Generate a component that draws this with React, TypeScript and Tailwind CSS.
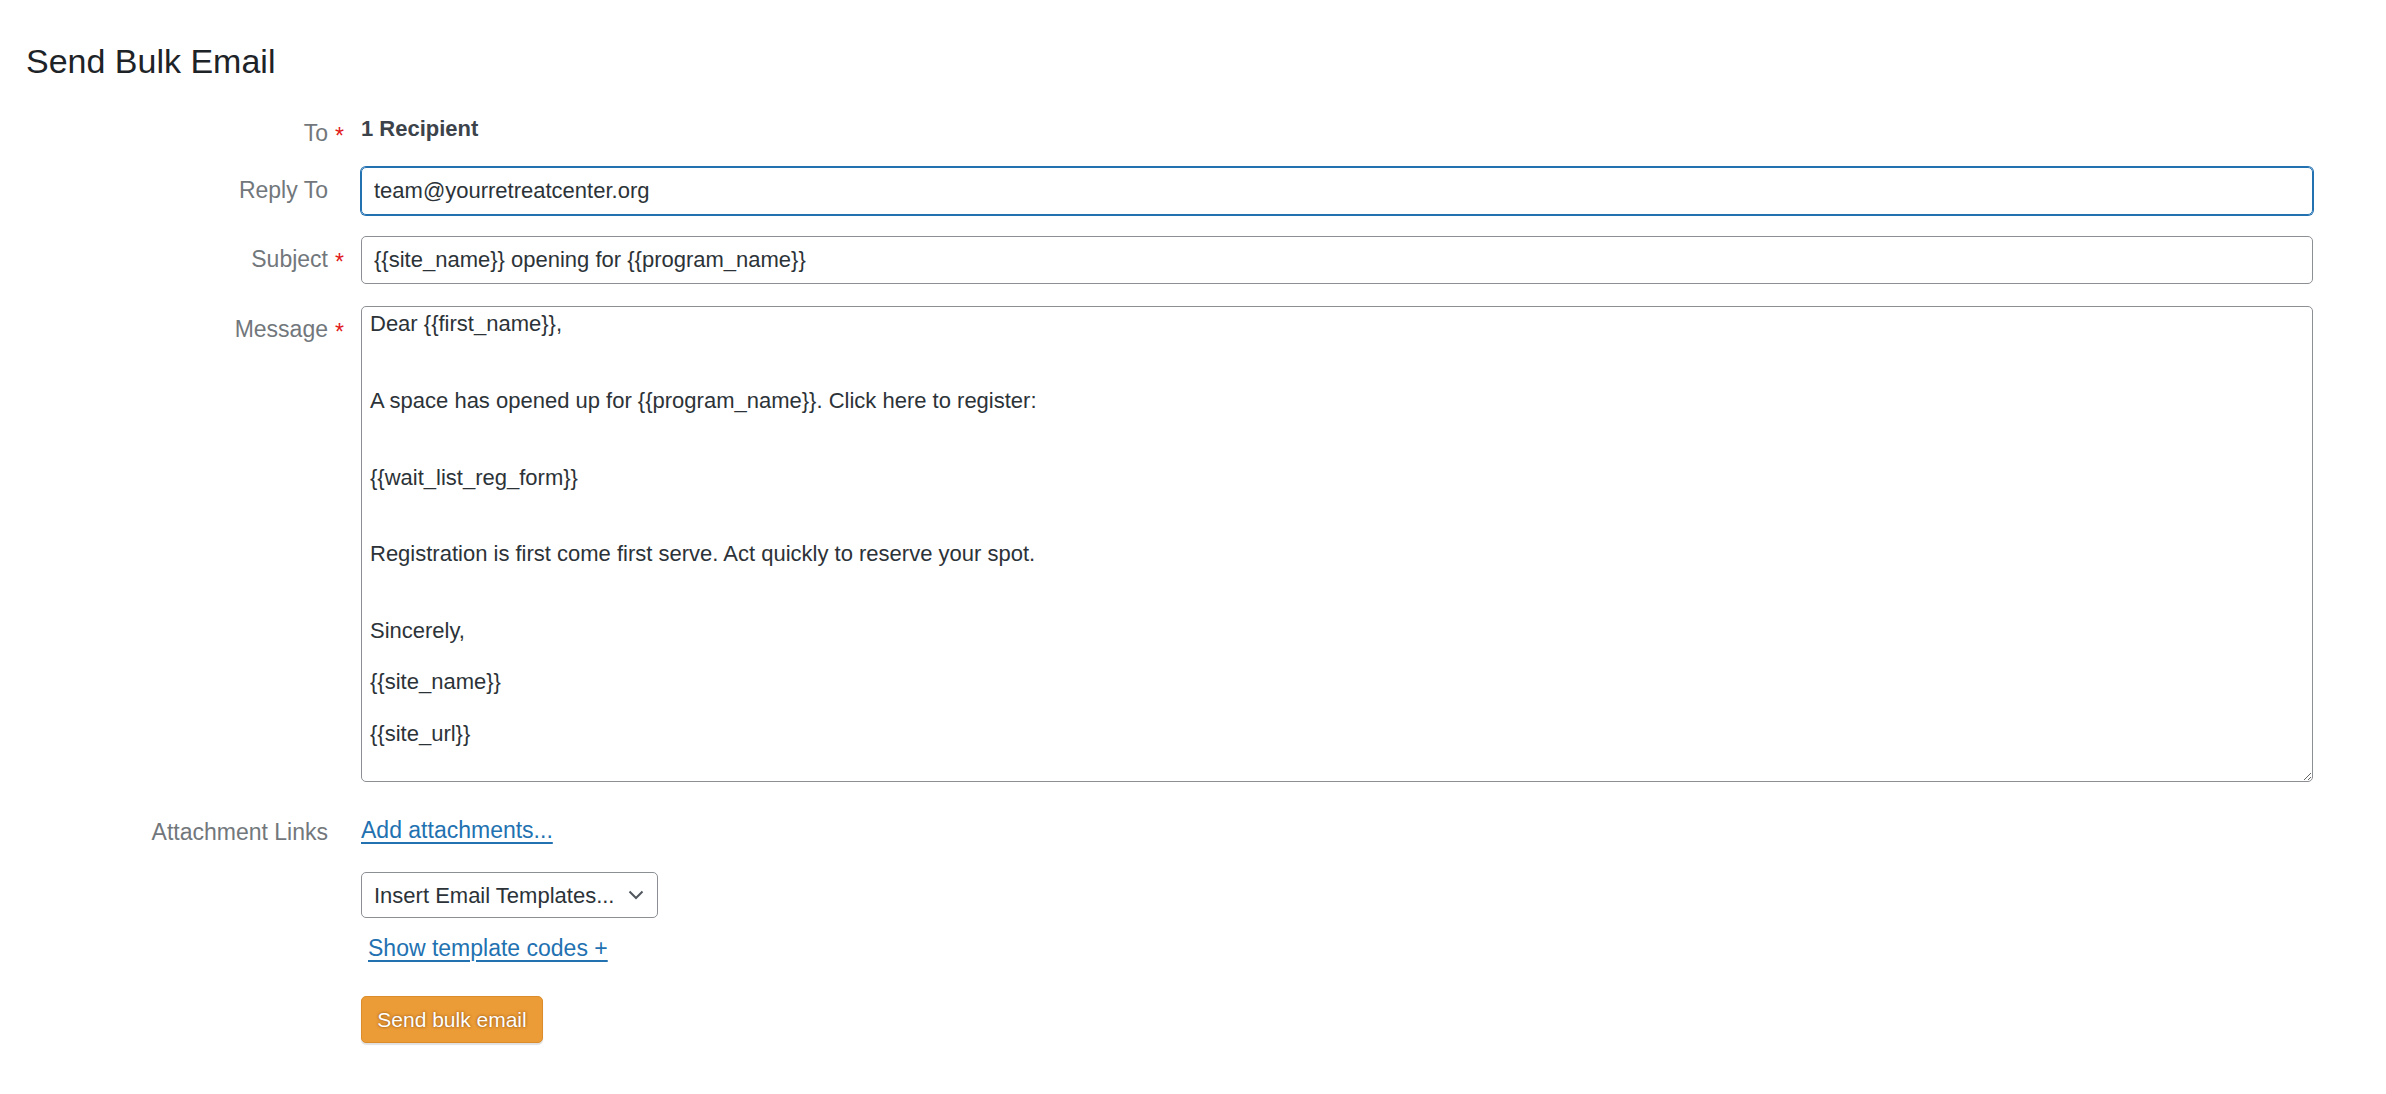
import type { ReactNode } from "react";

const message = `Dear {{first_name}},


A space has opened up for {{program_name}}. Click here to register:


{{wait_list_reg_form}}


Registration is first come first serve. Act quickly to reserve your spot.


Sincerely,

{{site_name}}

{{site_url}}`;

function Row({
  label,
  required,
  pad,
  className,
  children,
}: {
  label?: string;
  required?: boolean;
  pad: string;
  className?: string;
  children: ReactNode;
}) {
  return (
    <div className={`flex items-start ${className ?? ""}`}>
      <div className={`flex w-[320px] shrink-0 justify-end text-[23px] leading-[26px] text-[#72777c] ${pad}`}>
        <span>{label}</span>
        <span className="w-[18px] translate-y-[3px] pl-[7px] text-[#e2191b]">{required ? "*" : ""}</span>
      </div>
      <div className="ml-[15px] min-w-0 flex-1">{children}</div>
    </div>
  );
}

export default function App() {
  return (
    <div className="min-h-screen bg-white pl-[26px] pr-[73px] font-['Liberation_Sans',Arial,sans-serif]">
      <h1 className="pt-[41px] text-[34px] leading-[40px] font-normal text-[#1d2327]">Send Bulk Email</h1>

      <Row label="To" required pad="pt-[4px]" className="mt-[35px]">
        <div className="text-[22px] leading-[26px] font-bold text-[#3c434a]">1 Recipient</div>
      </Row>

      <Row label="Reply To" pad="pt-[10px]" className="mt-[21px]">
        <input
          readOnly
          value="team@yourretreatcenter.org"
          className="block h-[48px] w-full rounded-[5px] border border-[#2271b1] px-[12px] text-[22px] text-[#2c3338] shadow-[0_0_0_1px_#2271b1] outline-none"
        />
      </Row>

      <Row label="Subject" required pad="pt-[10px]" className="mt-[21px]">
        <input
          readOnly
          value="{{site_name}} opening for {{program_name}}"
          className="block h-[48px] w-full rounded-[5px] border border-[#8c8f94] px-[12px] text-[22px] text-[#2c3338] outline-none"
        />
      </Row>

      <Row label="Message" required pad="pt-[10px]" className="mt-[22px]">
        <textarea
          readOnly
          value={message}
          className="block h-[476px] w-full rounded-[5px] border border-[#8c8f94] px-[8px] pt-[4px] text-[22px] leading-[25.6px] text-[#2c3338] outline-none"
        />
      </Row>

      <Row label="Attachment Links" pad="pt-[2px]" className="mt-[35px]">
        <a href="#" className="block w-fit text-[23px] leading-[26px] text-[#2271b1] underline underline-offset-[4px]">
          Add attachments...
        </a>
      </Row>

      <Row pad="" className="mt-[27px]">
        <div className="flex h-[46px] w-[297px] items-center justify-between rounded-[5px] border border-[#8c8f94] pl-[12px] pr-[13px] text-[22px] text-[#2c3338]">
          <span>Insert Email Templates...</span>
          <svg width="16" height="10" viewBox="0 0 16 10" fill="none">
            <path d="M1.5 1.5l6.5 6.5 6.5-6.5" stroke="#50575e" strokeWidth="2" />
          </svg>
        </div>
        <a
          href="#"
          className="mt-[17px] ml-[7px] block w-fit text-[23px] leading-[26px] text-[#2271b1] underline underline-offset-[4px]"
        >
          Show template codes +
        </a>
        <button className="mt-[35px] flex h-[47px] w-[182px] items-center justify-center rounded-[5px] border border-[#dc8c2a] bg-[#ec9c36] text-[21px] text-white shadow-[0_2px_1px_rgba(0,0,0,0.12)] [text-shadow:0_0_3px_rgba(110,55,0,0.85)]">
          Send bulk email
        </button>
      </Row>
    </div>
  );
}
